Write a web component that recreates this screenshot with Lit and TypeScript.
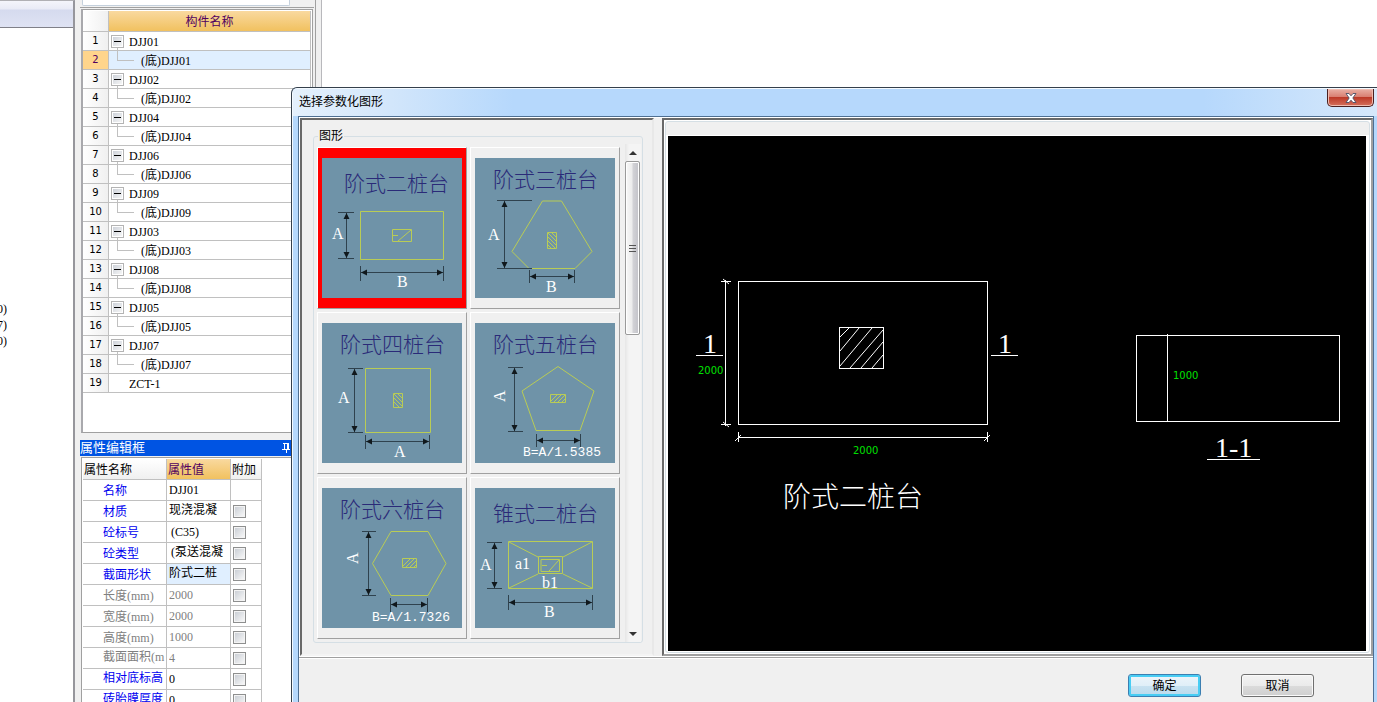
import { LitElement, html, svg, css, nothing } from "lit";
import { customElement, property, state } from "lit/decorators.js";
import { classMap } from "lit/directives/class-map.js";

const GROUPS = ["DJJ01", "DJJ02", "DJJ04", "DJJ06", "DJJ09", "DJJ03", "DJJ08", "DJJ05", "DJJ07"];

interface TreeRow { text: string; kind: "parent" | "child" | "leaf"; }
const TREE: TreeRow[] = [
  ...GROUPS.flatMap((g): TreeRow[] => [
    { text: g, kind: "parent" },
    { text: `(底)${g}`, kind: "child" },
  ]),
  { text: "ZCT-1", kind: "leaf" },
];

interface Prop { name: string; value: string; dim?: boolean; check?: boolean; active?: boolean; highName?: boolean; highValue?: boolean; indent?: boolean; }
const PROPS: Prop[] = [
  { name: "名称", value: "DJJ01" },
  { name: "材质", value: "现浇混凝", check: true, highValue: true },
  { name: "砼标号", value: "(C35)", check: true, indent: true },
  { name: "砼类型", value: "(泵送混凝", check: true, highValue: true, indent: true },
  { name: "截面形状", value: "阶式二桩", check: true, active: true, highValue: true },
  { name: "长度(mm)", value: "2000", check: true, dim: true },
  { name: "宽度(mm)", value: "2000", check: true, dim: true },
  { name: "高度(mm)", value: "1000", check: true, dim: true },
  { name: "截面面积(m", value: "4", check: true, dim: true, highName: true },
  { name: "相对底标高", value: "0", check: true, highName: true },
  { name: "砖胎膜厚度", value: "0", check: true, highName: true },
];

const FONT = css`
  :host {
    box-sizing: border-box;
    font-family: "Liberation Serif", "Noto Sans CJK SC", sans-serif;
    font-size: 12px;
    line-height: 18px;
    color: #000;
  }
  *, *::before, *::after { box-sizing: border-box; }
`;

/* Component tree */
@customElement("component-tree")
export class ComponentTree extends LitElement {
  @state() private selected = 1;

  static styles = [FONT, css`
    :host { display: block; background: #fff; border: 1px solid #a0a0a0; border-left: 2px solid #a9a9ad; padding: 1px 1px 0 0; }
    .grid { width: 100%; border-collapse: separate; border-spacing: 0; table-layout: fixed; }
    .num { width: 26px; }
    th, td { padding: 0; height: 19px; border-right: 1px solid #c0c0c0; border-bottom: 1px solid #c0c0c0; font-weight: normal; }
    thead th { height: 21px; padding-top: 2px; background: linear-gradient(#f9d99f, #f1c15f); color: #500060; }
    thead .corner, tbody th { background: linear-gradient(90deg, #fff, #f0f0f0); color: #000; }
    tbody th { font-family: "DejaVu Sans", sans-serif; font-size: 10px; text-align: center; }
    tbody .on th { background: #ffd58c; color: #500060; }
    .on td { background: #e0efff; }
    .cell { display: flex; align-items: center; height: 18px; position: relative; }
    .label { padding-top: 2px; }
    .parent { padding-left: 2px; gap: 5px; }
    .child { padding-left: 32px; }
    .leaf { padding-left: 20px; }
    .toggle { width: 13px; height: 13px; padding: 0; border: 1px solid #b4b4b4; outline: 1px solid #fff; outline-offset: -2px; background: linear-gradient(135deg, #c9ced6, #fafafa); display: grid; place-items: center; }
    .toggle::after { content: ""; width: 7px; height: 1px; background: #000; }
    .branch { position: absolute; left: 8px; top: -3px; width: 17px; height: 13px; border-left: 1px solid #c0c0c0; border-bottom: 1px solid #c0c0c0; }
  `];

  render() {
    return html`<table class="grid">
      <colgroup><col class="num" /><col /></colgroup>
      <thead><tr><th class="corner"></th><th scope="col">构件名称</th></tr></thead>
      <tbody>
        ${TREE.map((r, i) => html`<tr class=${classMap({ on: i === this.selected })} @click=${() => (this.selected = i)}>
          <th scope="row">${i + 1}</th>
          <td><div class="cell ${r.kind}">
            ${r.kind === "parent" ? html`<button class="toggle" aria-label="折叠"></button>` : nothing}
            ${r.kind === "child" ? html`<span class="branch"></span>` : nothing}
            <span class="label">${r.text}</span>
          </div></td>
        </tr>`)}
      </tbody>
    </table>`;
  }
}

/* Property editor */
@customElement("property-editor")
export class PropertyEditor extends LitElement {
  static styles = [FONT, css`
    :host { display: flex; flex-direction: column; }
    .title { display: flex; align-items: center; justify-content: space-between; height: 16px; margin: 0; padding-right: 24px; background: #0054e3; color: #fff; font-size: 13px; font-weight: normal; line-height: 16px; }
    .body { flex: 1; margin: 1px 0 0 1px; background: #fff; border-top: 1px solid #a0a0a0; border-left: 1px solid #a0a0a0; padding: 1px 0 0 1px; overflow: hidden; }
    .grid { width: 179px; border-collapse: separate; border-spacing: 0; table-layout: fixed; }
    .c1 { width: 84px; }
    .c2 { width: 64px; }
    th, td { padding: 0; height: 21px; border-right: 1px solid #c0c0c0; border-bottom: 1px solid #c0c0c0; font-weight: normal; text-align: left; white-space: nowrap; overflow: hidden; }
    thead th { padding: 1px 0 0 1px; background: linear-gradient(#fff, #f0f0f0); }
    thead .cur { background: linear-gradient(#f9d99f, #f1c15f); color: #500060; }
    tbody th { padding-left: 20px; color: #0000f0; }
    tbody td { padding-left: 2px; }
    .dim th, .dim td { color: #808080; }
    .line { display: block; height: 20px; line-height: 20px; overflow: hidden; }
    .low { line-height: 22px; }
    .high { line-height: 18px; }
    .indent { padding-left: 2px; }
    .active { background: #e0efff; }
    .check { appearance: none; display: block; width: 13px; height: 13px; margin: 0; border: 1px solid #8e8f8f; outline: 1px solid #f4f4f4; outline-offset: -2px; background: linear-gradient(135deg, #c6cbd2, #fbfbfb); }
  `];

  render() {
    return html`
      <h2 class="title"><span>属性编辑框</span>
        <svg width="8" height="10" viewBox="0 0 8 10" shape-rendering="crispEdges" fill="none" stroke="#fff">
          <path d="M2.5 0V6M1 .5H7M5.5 0V6M6.5 0V6M0 6.5H8M4 7V10" />
        </svg>
      </h2>
      <div class="body"><table class="grid">
        <colgroup><col class="c1" /><col class="c2" /><col /></colgroup>
        <thead><tr><th scope="col">属性名称</th><th scope="col" class="cur">属性值</th><th scope="col">附加</th></tr></thead>
        <tbody>${PROPS.map((p) => html`<tr class=${classMap({ dim: !!p.dim })}>
          <th scope="row"><span class=${classMap({ line: true, low: !p.highName, high: !!p.highName })}>${p.name}</span></th>
          <td class=${classMap({ active: !!p.active })}><span class=${classMap({ line: true, high: !!p.highValue, indent: !!p.indent })}>${p.value}</span></td>
          <td>${p.check ? html`<input class="check" type="checkbox" aria-label=${"附加 " + p.name} />` : nothing}</td>
        </tr>`)}</tbody>
      </table></div>`;
  }
}

/* Arrowed dimension lines used by the thumbnails */
const vDim = (x: number, y1: number, y2: number, a: number, b: number) => svg`
  <path class="dim" d="M${a} ${y1}.5H${b}M${a} ${y2}.5H${b}M${x}.5 ${y1}V${y2}" />
  <path class="tip" d="M${x + 0.5} ${y1 + 1}l3 6h-6zM${x + 0.5} ${y2}l3 -6h-6z" />`;
const hDim = (y: number, x1: number, x2: number, a: number, b: number) => svg`
  <path class="dim" d="M${x1}.5 ${a}V${b}M${x2}.5 ${a}V${b}M${x1} ${y}.5H${x2}" />
  <path class="tip" d="M${x1 + 1} ${y + 0.5}l6 3v-6zM${x2} ${y + 0.5}l-6 3v-6z" />`;

interface Shape { title: string; tx: number; ty: number; art: unknown; }
const SHAPES: Shape[] = [
  { title: "阶式二桩台", tx: 22, ty: 33, art: svg`
    <path class="ln" d="M38.5 53.5H121.5V101.5H38.5ZM70.5 71.5H89.5V83.5H70.5ZM71 77.5H76M76 83L89 72" />
    ${vDim(24, 54, 100, 16, 32)}${hDim(114, 38, 121, 108, 123)}
    <text class="lt" x="10" y="81">A</text><text class="lt" x="75" y="129">B</text>` },
  { title: "阶式三桩台", tx: 18, ty: 29, art: svg`
    <path class="ln" d="M67.5 43H86.5L117 93.500L100 110.500H54L37 93.500ZM72.500 74.500H81.500V90.500H72.500ZM73 75L81 83M73 79L81 87M73 83L80 90M73 87L76 90M77 75L81 79" />
    ${vDim(29, 42, 110, 22, 57)}${hDim(118, 54, 99, 112, 125)}
    <text class="lt" x="13" y="82">A</text><text class="lt" x="71" y="134">B</text>` },
  { title: "阶式四桩台", tx: 18, ty: 29, art: svg`
    <path class="ln" d="M43.500 45.500H108.500V109.500H43.500ZM71.500 70.500H80.500V84.500H71.500ZM72 71L80 79M72 75L80 83M72 79L77 84M76 71L80 75" />
    ${vDim(32, 45, 109, 26, 41)}${hDim(118, 43, 107, 112, 126)}
    <text class="lt" x="16" y="80">A</text><text class="lt" x="72" y="134">A</text>` },
  { title: "阶式五桩台", tx: 18, ty: 29, art: svg`
    <path class="ln" d="M83 43.500L119 68L105 107.500H61L47 68ZM75.500 71.500H90.500V79.500H75.500ZM76 78L82 72M79 79L86 72M83 79L90 72M87 79L90 76" />
    ${vDim(39, 44, 108, 33, 48)}${hDim(117, 61, 105, 111, 124)}
    <text class="lt" transform="translate(30 79) rotate(-90)">A</text><text class="mono" x="48" y="133">B=A/1.5385</text>` },
  { title: "阶式六桩台", tx: 18, ty: 29, art: svg`
    <path class="ln" d="M69 43.500H106L124 75.500L106 107.500H69L50.500 75.500ZM80.500 70.500H94.500V79.500H80.500ZM81 78L88 71M84 79L92 71M88 79L94 73M92 79L94 77" />
    ${vDim(46, 43, 107, 40, 54)}${hDim(116, 68, 105, 110, 124)}
    <text class="lt" transform="translate(36 76) rotate(-90)">A</text><text class="mono" x="50" y="133">B=A/1.7326</text>` },
  { title: "锥式二桩台", tx: 18, ty: 33, art: svg`
    <path class="ln" d="M33.500 53.500H117.500V100.500H33.500ZM63.500 68.500H87.500V85.500H63.500ZM66 71.500H84.500V83.500H66ZM34 54L63 69M117 54L88 69M34 100L63 86M117 100L88 86M67 77.500H72M74 83L84 72" />
    ${vDim(19, 54, 100, 12, 27)}${hDim(114, 33, 117, 107, 122)}
    <text class="lt" x="5" y="82">A</text><text class="lt" x="40" y="81">a1</text><text class="lt" x="67" y="100">b1</text><text class="lt" x="69" y="129">B</text>` },
];

@customElement("shape-card")
export class ShapeCard extends LitElement {
  @property({ attribute: false }) shape!: Shape;
  @property({ type: Boolean }) selected = false;

  static styles = [FONT, css`
    :host { display: block; }
    .card { display: block; width: 100%; height: 162px; padding: 10px 4px; border: 1px solid; border-color: #fff #a0a0a0 #a0a0a0 #fff; background: #f0f0f0; }
    .picked { background: #f00; }
    .art { display: block; width: 100%; height: 140px; background: #6f93a8; }
    .ln { fill: none; stroke: #b9cc55; }
    .dim { fill: none; stroke: #2f424e; }
    .tip { fill: #10181c; }
    .ttl { font: 300 21px "Noto Sans CJK SC", sans-serif; fill: #2a2a78; }
    .lt { font: 16px "Liberation Serif", serif; fill: #fff; }
    .mono { font: 13px "Liberation Mono", monospace; fill: #fff; }
  `];

  render() {
    const s = this.shape;
    return html`<button class=${classMap({ card: true, picked: this.selected })} aria-pressed=${this.selected ? "true" : "false"}>
      <svg class="art" viewBox="0 0 140 140">
        <text class="ttl" x=${s.tx} y=${s.ty}>${s.title}</text>
        ${s.art}
      </svg>
    </button>`;
  }
}

/* Dialog with the parametric shapes */
@customElement("shape-dialog")
export class ShapeDialog extends LitElement {
  @state() private picked = 0;

  static styles = [FONT, css`
    :host { display: flex; flex-direction: column; padding: 0 3px 0 6px; border: 1px solid #35404c; border-right: 0; border-bottom: 0; border-radius: 6px 0 0 0; background: #b5d8fc; box-shadow: inset 1px 1px 0 #f4faff; overflow: hidden; }
    .title { display: flex; justify-content: space-between; align-items: flex-start; height: 27px; background: linear-gradient(90deg, #e4f0fc, #d4e7fb 90px, #b6d8fc 220px, #b6d8fc 84%, #d6e8fb); margin: 1px -3px 0 -5px; padding: 0 3px 0 6px; }
    .name { margin: 0; font-size: 12px; font-weight: normal; line-height: 26px; }
    .close { width: 47px; height: 18px; padding: 0; border: 1px solid #4a2020; border-top: 0; border-radius: 0 0 5px 5px; background: linear-gradient(#e9b0a5, #d98072 45%, #bd3a28 50%, #d4705c); box-shadow: inset 0 0 0 1px #f0bcb0; display: grid; place-items: center; }
    .client { flex: 1; min-height: 0; display: flex; flex-direction: column; background: #f0f0f0; border: 1px solid #4e6f92; border-bottom: 0; }
    .panes { flex: 1; min-height: 0; display: flex; gap: 8px; border-top: 1px solid #fff; border-left: 1px solid #fff; border-bottom: 1px solid #fff; }
    .pane { border: 2px solid; border-color: #696969 #e8e8e8 #f4f4f4 #696969; min-width: 0; }
    .left { width: 354px; padding: 8px 9px 11px 11px; display: flex; }
    .right { flex: 1; padding: 1px; background: #fff; display: flex; border-right-color: #a0a0a0; border-bottom-color: #a0a0a0; }
    .frame { flex: 1; min-width: 0; border: 1px solid #d5dfe5; border-radius: 3px; padding: 14px 3px 1px 2px; background: linear-gradient(#f0f0f0 13px, #fff 13px); display: flex; }
    .canvas { flex: 1; width: 100%; background: #000; display: block; min-width: 0; }
    .box { flex: 1; min-width: 0; min-height: 0; margin: 0; padding: 0 1px 0 3px; border: 1px solid #d5dfe5; border-radius: 3px; display: flex; flex-direction: column; }
    .box legend { padding: 0 1px; margin-left: 1px; line-height: 16px; }
    .scroll { display: flex; gap: 5px; height: 500px; overflow: hidden; }
    .cards { flex: 1; display: grid; grid-template-columns: 1fr 1fr; gap: 3px; align-content: start; padding-top: 3px; }
    .bar { width: 16px; display: flex; flex-direction: column; align-items: center; background: linear-gradient(90deg, #e6e6e6, #f4f4f4 4px); }
    .arrow { width: 16px; height: 17px; border: 0; padding: 0; background: none; display: grid; place-items: center; }
    .track { flex: 1; width: 100%; }
    .thumb { width: 15px; height: 174px; border: 1px solid #9a9a9a; border-radius: 2px; background: linear-gradient(90deg, #f8f8f8, #ececec 45%, #d2d2d6 55%, #c2c2c8); box-shadow: inset 0 0 0 1px #fff; display: grid; place-items: center; }
    .foot { height: 45px; display: flex; justify-content: flex-end; align-items: flex-start; gap: 40px; padding: 16px 59px 0 0; border-top: 1px solid #a0a0a0; box-shadow: inset 0 1px 0 #fff; }
    .btn { width: 73px; height: 23px; padding: 0; font: 12px/18px "Liberation Serif", "Noto Sans CJK SC", sans-serif; color: #000; border: 1px solid #707070; border-radius: 3px; background: linear-gradient(#f3f3f3, #ebebeb 50%, #dcdcdc 50%, #cfcfcf); box-shadow: inset 0 0 0 1px #fafafa; }
    .ok { border-color: #3c7fb1; background: linear-gradient(#eef5fa, #e0eff8 50%, #c9e2f1 50%, #b9daec); box-shadow: inset 0 0 0 2px #48cdf4; }
    .wl { fill: none; stroke: #fff; shape-rendering: crispEdges; }
    .green { font: 10px "DejaVu Sans", sans-serif; fill: #00e000; }
    .big { font: 28px "Liberation Serif", serif; fill: #fff; }
    .cap { font: 300 28px "Noto Sans CJK SC", sans-serif; fill: #fff; }
  `];

  render() {
    return html`
      <header class="title">
        <h1 class="name">选择参数化图形</h1>
        <button class="close" aria-label="关闭">
          <svg width="12" height="10" viewBox="0 0 12 10"><path d="M1 .5H4L6 2.800L8 .5H11L7.800 5L11 9.500H8L6 7.200L4 9.500H1L4.200 5Z" fill="#fff" stroke="#4c5066" stroke-width=".9" /></svg>
        </button>
      </header>
      <div class="client">
        <div class="panes">
          <div class="pane left"><fieldset class="box"><legend>图形</legend>
            <div class="scroll">
              <div class="cards">${SHAPES.map((s, i) => html`<shape-card .shape=${s} ?selected=${i === this.picked} @click=${() => (this.picked = i)}></shape-card>`)}</div>
              <div class="bar">
                <button class="arrow" aria-label="向上"><svg width="8" height="4"><path d="M4 0L8 4H0Z" fill="#333" /></svg></button>
                <div class="track"><div class="thumb"><svg width="7" height="9" shape-rendering="crispEdges"><path d="M0 1.500H7M0 4.500H7M0 7.500H7" stroke="#555" /></svg></div></div>
                <button class="arrow" aria-label="向下"><svg width="8" height="4"><path d="M0 0H8L4 4Z" fill="#333" /></svg></button>
              </div>
            </div>
          </fieldset></div>
          <div class="pane right"><div class="frame">
            <svg class="canvas" viewBox="0 0 698 515" preserveAspectRatio="xMidYMid meet">
              <path class="wl" d="M70.500 145.500H319.500V288.500H70.500ZM171.500 191.500H215.500V232.500H171.500ZM57.500 144V290M53 145.500H63M53 288.500H63M70.500 296V306M319.500 296V306M70 301.500H320M28 219.500H55M323 219.500H350" />
              <path class="wl" d="M468.500 199.500H671.500V285.500H468.500ZM499.500 198V286M539 323.500H592" />
              <path d="M55 143L61 148M55 286L61 291M67 305L73 299M316 305L322 299M172 201L181 192M172 215L191 192M172 230L204 192M182 232L215 194M193 232L215 206M204 232L215 219" fill="none" stroke="#fff" />
              <text class="big" x="35" y="217">1</text><text class="big" x="330" y="217">1</text>
              <text class="green" x="30" y="238">2000</text><text class="green" x="185" y="318">2000</text><text class="green" x="505" y="243">1000</text>
              <text class="big" x="547" y="321">1-1</text>
              <text class="cap" x="115" y="371">阶式二桩台</text>
            </svg>
          </div></div>
        </div>
        <footer class="foot"><button class="btn ok">确定</button><button class="btn">取消</button></footer>
      </div>`;
  }
}

@customElement("app-root")
export class AppRoot extends LitElement {
  static styles = [FONT, css`
    :host { display: flex; position: relative; height: 100vh; overflow: hidden; background: #fff; }
    .nav { width: 75px; border-right: 2px solid #96969c; border-top: 1px solid #b0b0b4; background: #fff; }
    .strip { height: 27px; border-bottom: 1px solid #808088; background: linear-gradient(#f4f5fb, #e9ebf6 8px, #d5daee 9px, #dfe3f3); }
    .items { display: flex; flex-direction: column; width: 7px; margin: 273px 0 0 0; padding: 0; list-style: none; overflow: hidden; }
    .items li { display: flex; justify-content: flex-end; height: 16px; line-height: 16px; }
    .side { width: 240px; display: flex; flex-direction: column; padding: 0 1px 0 5px; background: #f0f0f0; }
    .tools { height: 8px; border-bottom: 1px solid #a0a0a0; padding: 0 24px 1px 2px; display: flex; }
    .field { flex: 1; border: 1px solid #c4d0dc; border-top: 0; border-radius: 0 0 2px 2px; background: #fff; }
    component-tree { height: 424px; margin: 1px 1px 0 1px; }
    property-editor { flex: 1; min-height: 0; margin-top: 7px; }
    .edge { width: 7px; background: #f0f0f0; border-left: 1px solid #a0a0a0; border-right: 1px solid #b8b8bc; }
    shape-dialog { position: absolute; left: 291px; top: 87px; right: 0; bottom: 0; }
  `];

  render() {
    return html`
      <nav class="nav"><div class="strip"></div>
        <ul class="items"><li>0)</li><li>7)</li><li>0)</li></ul>
      </nav>
      <aside class="side">
        <div class="tools"><div class="field"></div></div>
        <component-tree></component-tree>
        <property-editor></property-editor>
      </aside>
      <div class="edge"></div>
      <shape-dialog role="dialog" aria-label="选择参数化图形"></shape-dialog>`;
  }
}
